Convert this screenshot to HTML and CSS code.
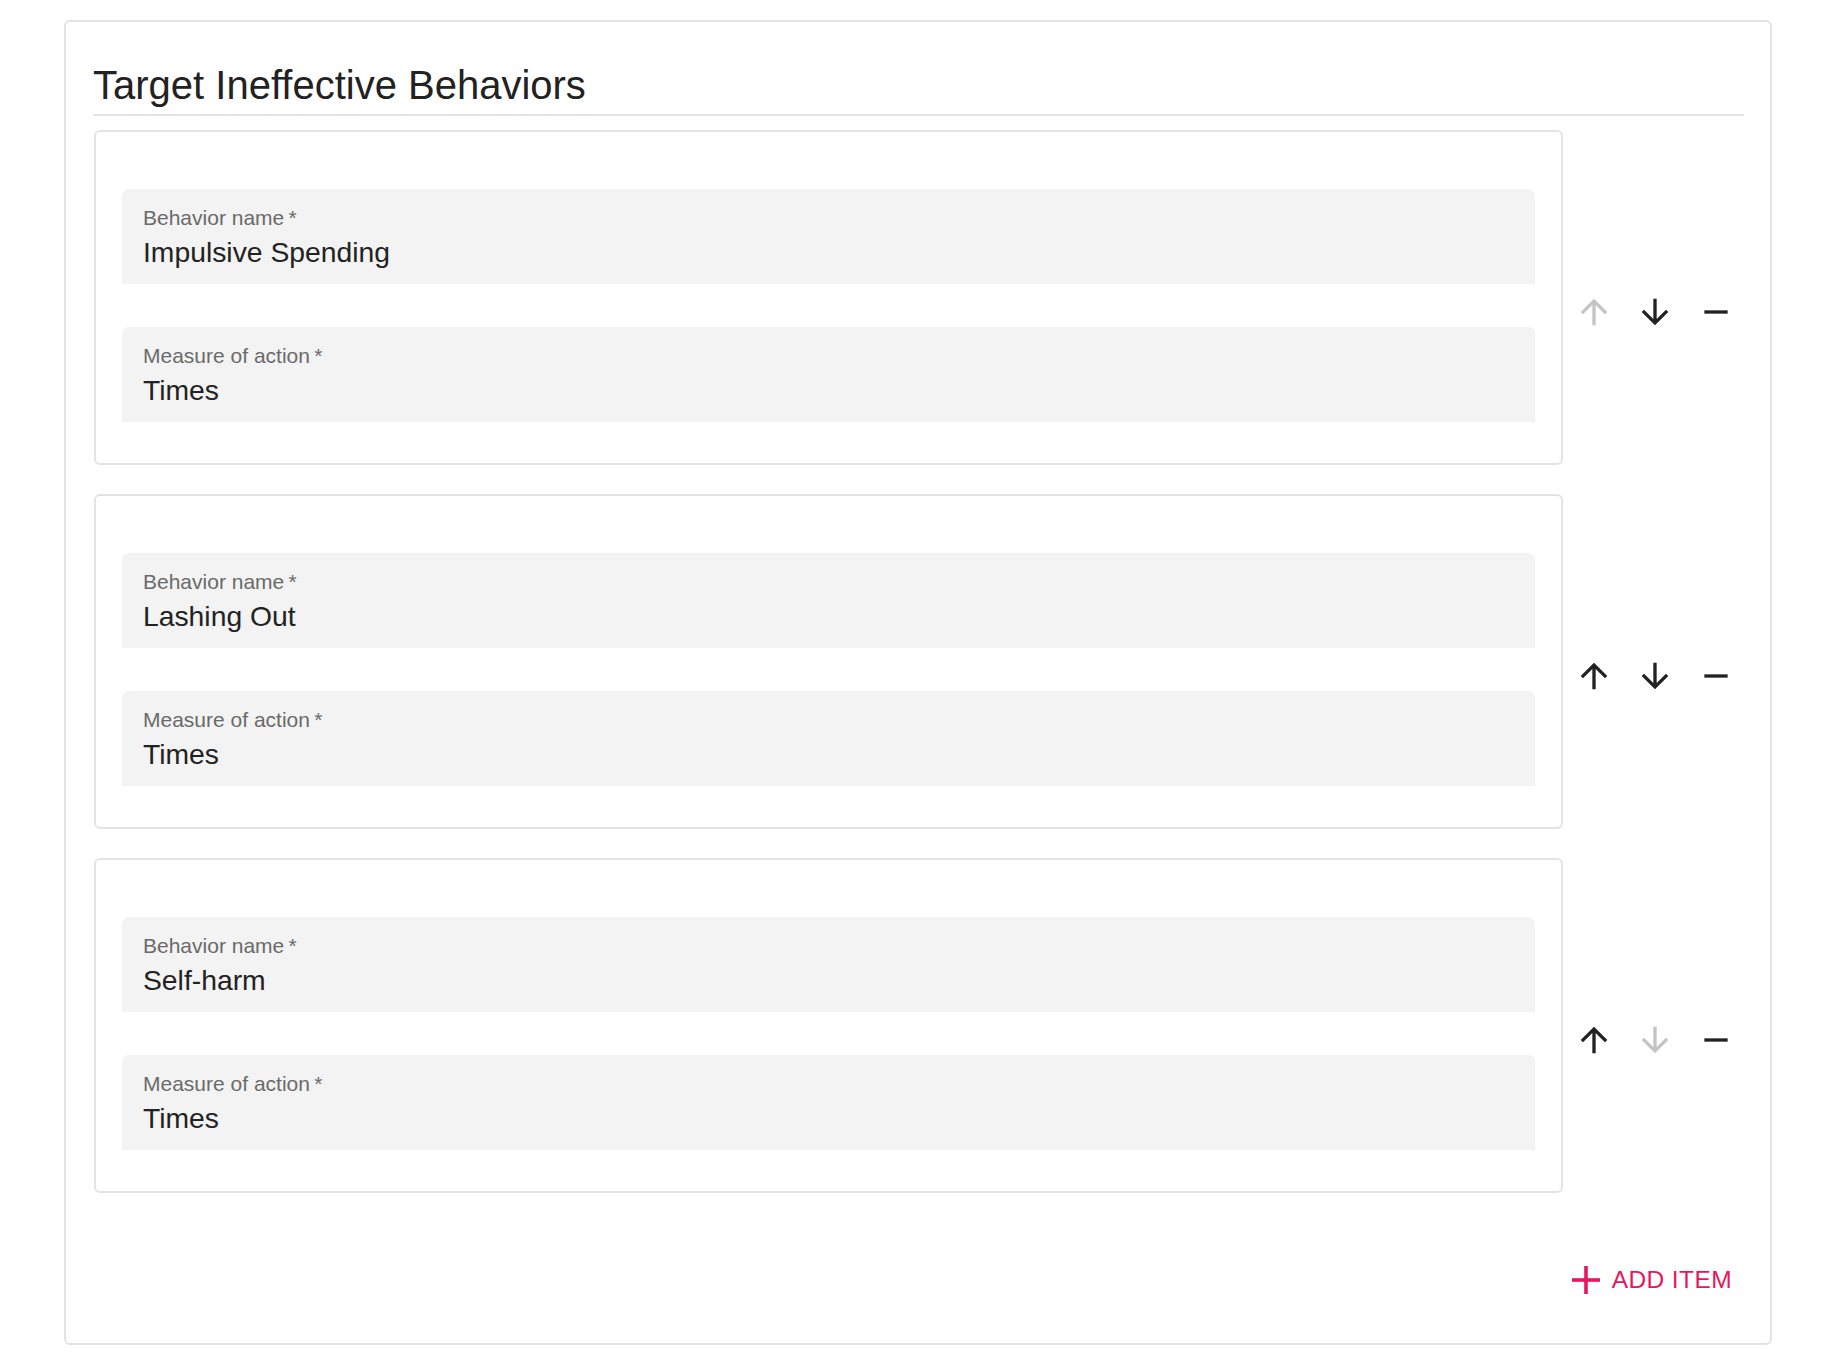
FILE: index.html
```html
<!DOCTYPE html>
<html lang="en">
<head>
<meta charset="utf-8">
<title>Target Ineffective Behaviors</title>
<link rel="stylesheet" href="styles.css">
</head>
<body>
<div class="panel">
  <h2 class="title">Target Ineffective Behaviors</h2>
  <div class="list">
    <div class="row">
      <div class="item">
        <div class="field"><span class="label">Behavior name&thinsp;*</span><span class="value">Impulsive Spending</span></div>
        <div class="field"><span class="label">Measure of action&thinsp;*</span><span class="value">Times</span></div>
      </div>
      <div class="actions">
        <button class="icon-btn is-disabled" aria-label="Move up"><svg viewBox="0 0 24 24"><path d="M4 12l1.41 1.41L11 7.83V20h2V7.83l5.58 5.59L20 12l-8-8-8 8z"/></svg></button>
        <button class="icon-btn" aria-label="Move down"><svg viewBox="0 0 24 24"><path d="M20 12l-1.41-1.41L13 16.17V4h-2v12.17l-5.58-5.59L4 12l8 8 8-8z"/></svg></button>
        <button class="icon-btn" aria-label="Remove"><svg viewBox="0 0 24 24"><path d="M19 13H5v-2h14v2z"/></svg></button>
      </div>
    </div>
    <div class="row">
      <div class="item">
        <div class="field"><span class="label">Behavior name&thinsp;*</span><span class="value">Lashing Out</span></div>
        <div class="field"><span class="label">Measure of action&thinsp;*</span><span class="value">Times</span></div>
      </div>
      <div class="actions">
        <button class="icon-btn" aria-label="Move up"><svg viewBox="0 0 24 24"><path d="M4 12l1.41 1.41L11 7.83V20h2V7.83l5.58 5.59L20 12l-8-8-8 8z"/></svg></button>
        <button class="icon-btn" aria-label="Move down"><svg viewBox="0 0 24 24"><path d="M20 12l-1.41-1.41L13 16.17V4h-2v12.17l-5.58-5.59L4 12l8 8 8-8z"/></svg></button>
        <button class="icon-btn" aria-label="Remove"><svg viewBox="0 0 24 24"><path d="M19 13H5v-2h14v2z"/></svg></button>
      </div>
    </div>
    <div class="row">
      <div class="item">
        <div class="field"><span class="label">Behavior name&thinsp;*</span><span class="value">Self-harm</span></div>
        <div class="field"><span class="label">Measure of action&thinsp;*</span><span class="value">Times</span></div>
      </div>
      <div class="actions">
        <button class="icon-btn" aria-label="Move up"><svg viewBox="0 0 24 24"><path d="M4 12l1.41 1.41L11 7.83V20h2V7.83l5.58 5.59L20 12l-8-8-8 8z"/></svg></button>
        <button class="icon-btn is-disabled" aria-label="Move down"><svg viewBox="0 0 24 24"><path d="M20 12l-1.41-1.41L13 16.17V4h-2v12.17l-5.58-5.59L4 12l8 8 8-8z"/></svg></button>
        <button class="icon-btn" aria-label="Remove"><svg viewBox="0 0 24 24"><path d="M19 13H5v-2h14v2z"/></svg></button>
      </div>
    </div>
  </div>
  <div class="footer">
    <button class="add-btn"><svg class="add-icon" viewBox="0 0 28 28"><rect x="0" y="12.2" width="28" height="3.6"/><rect x="12.2" y="0" width="3.6" height="28"/></svg><span>ADD ITEM</span></button>
  </div>
</div>
</body>
</html>
```

FILE: styles.css
```css
* {
  box-sizing: border-box;
}

body {
  margin: 0;
  background: #ffffff;
  font-family: "Liberation Sans", Arial, Helvetica, sans-serif;
  color: #222222;
}

.panel {
  margin: 20px 0 0 64px;
  width: 1708px;
  border: 2px solid #e3e3e3;
  border-radius: 6px;
  padding: 40px 26px 39px 27px;
}

.title {
  margin: 0;
  padding-bottom: 5px;
  border-bottom: 2px solid #e3e3e3;
  font-size: 40px;
  font-weight: 400;
  line-height: 47px;
  color: #222222;
}

.list {
  margin-top: 14px;
  padding-left: 1px;
}

.row {
  display: flex;
  align-items: center;
}

.item {
  flex: 0 0 1469px;
  margin-bottom: 29px;
  border: 2px solid #e3e3e3;
  border-radius: 6px;
  padding: 57px 26px 41px 26px;
  display: flex;
  flex-direction: column;
  gap: 43px;
}

.field {
  height: 95px;
  background: #f3f3f3;
  border-radius: 7px 7px 0 0;
  padding: 17px 21px 0 21px;
  display: flex;
  flex-direction: column;
}

.label {
  font-size: 21px;
  line-height: 24px;
  color: #6a6a6a;
}

.value {
  margin-top: 6px;
  font-size: 28.3px;
  line-height: 32px;
  color: #222222;
}

.actions {
  flex: 1 1 auto;
  display: flex;
  align-items: center;
  gap: 21px;
  padding-left: 11px;
}

.icon-btn {
  width: 40px;
  height: 40px;
  padding: 0;
  border: 0;
  background: none;
  display: flex;
  align-items: center;
  justify-content: center;
  color: #222222;
}

.icon-btn svg {
  width: 40px;
  height: 40px;
  fill: currentColor;
}

.icon-btn.is-disabled {
  color: #c4c4c4;
}

.footer {
  display: flex;
  justify-content: flex-end;
  margin-top: 38px;
  margin-bottom: 4px;
}

.add-btn {
  display: inline-flex;
  align-items: center;
  gap: 12px;
  height: 40px;
  padding: 0 12px 0 0;
  border: 0;
  background: none;
  font-family: "Liberation Sans", Arial, Helvetica, sans-serif;
  font-size: 24.5px;
  line-height: 40px;
  letter-spacing: 0.4px;
  color: #e5175f;
}

.add-icon {
  width: 28px;
  height: 28px;
  fill: currentColor;
}
```
